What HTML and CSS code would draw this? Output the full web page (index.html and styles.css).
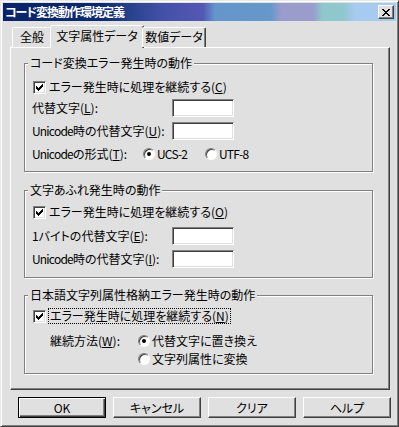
FILE: index.html
```html
<!DOCTYPE html>
<html>
<head>
    <meta charset="utf-8">
    <title>コード変換動作環境定義</title>
    <link rel="stylesheet" href="styles.css">
</head>
<body>
<div class="window">
    <div class="titlebar">
        <span class="title-text">コード変換動作環境定義</span>
        <button class="close-btn" aria-label="閉じる">
            <svg width="8" height="7" viewBox="0 0 8 7" shape-rendering="crispEdges">
                <path d="M0 0h2v1h-2z M6 0h2v1h-2z M1 1h2v1h-2z M5 1h2v1h-2z M2 2h4v1h-4z M3 3h2v1h-2z M2 4h4v1h-4z M1 5h2v1h-2z M5 5h2v1h-2z M0 6h2v1h-2z M6 6h2v1h-2z" fill="#000"/>
            </svg>
        </button>
    </div>

    <div class="tabs">
        <div class="tab tab-general">全般</div>
        <div class="tab tab-text active">文字属性データ</div>
        <div class="tab tab-num">数値データ</div>
    </div>

    <div class="panel">
        <fieldset class="group group-code">
            <legend>コード変換エラー発生時の動作</legend>
            <div class="row check-row cb-code">
                <span class="checkbox"><svg width="7" height="7" viewBox="0 0 7 7" shape-rendering="crispEdges"><path d="M6 0h1v1h-1z M5 1h2v1h-2z M0 2h1v1h-1z M4 2h3v1h-3z M0 3h2v1h-2z M3 3h3v1h-3z M0 4h5v1h-5z M1 5h3v1h-3z M2 6h1v1h-1z" fill="#000"/></svg></span>
                <span>エラー発生時に処理を継続する(<u>C</u>)</span>
            </div>
            <div class="row field-row fr-1">
                <span class="field-label">代替文字(<u>L</u>):</span>
                <input type="text" class="edit">
            </div>
            <div class="row field-row fr-2">
                <span class="field-label"><span class="en">Unicode</span>時の代替文字(<u>U</u>):</span>
                <input type="text" class="edit">
            </div>
            <div class="row radio-row fr-3">
                <span class="radio-label"><span class="en">Unicode</span>の形式(<u>T</u>):</span>
                <span class="option opt-ucs"><span class="radio checked"></span><span class="en">UCS-2</span></span>
                <span class="option"><span class="radio"></span><span class="en">UTF-8</span></span>
            </div>
        </fieldset>

        <fieldset class="group group-overflow">
            <legend>文字あふれ発生時の動作</legend>
            <div class="row check-row cb-overflow">
                <span class="checkbox"><svg width="7" height="7" viewBox="0 0 7 7" shape-rendering="crispEdges"><path d="M6 0h1v1h-1z M5 1h2v1h-2z M0 2h1v1h-1z M4 2h3v1h-3z M0 3h2v1h-2z M3 3h3v1h-3z M0 4h5v1h-5z M1 5h3v1h-3z M2 6h1v1h-1z" fill="#000"/></svg></span>
                <span>エラー発生時に処理を継続する(<u>O</u>)</span>
            </div>
            <div class="row field-row fr-4">
                <span class="field-label">1バイトの代替文字(<u>E</u>):</span>
                <input type="text" class="edit">
            </div>
            <div class="row field-row fr-2">
                <span class="field-label"><span class="en">Unicode</span>時の代替文字(<u>I</u>):</span>
                <input type="text" class="edit">
            </div>
        </fieldset>

        <fieldset class="group group-jp">
            <legend>日本語文字列属性格納エラー発生時の動作</legend>
            <div class="row check-row cb-jp">
                <span class="checkbox"><svg width="7" height="7" viewBox="0 0 7 7" shape-rendering="crispEdges"><path d="M6 0h1v1h-1z M5 1h2v1h-2z M0 2h1v1h-1z M4 2h3v1h-3z M0 3h2v1h-2z M3 3h3v1h-3z M0 4h5v1h-5z M1 5h3v1h-3z M2 6h1v1h-1z" fill="#000"/></svg></span>
                <span class="focused">エラー発生時に処理を継続する(<u>N</u>)</span>
            </div>
            <div class="method">
                <span class="method-label">継続方法(<u>W</u>):</span>
                <span class="option"><span class="radio checked"></span>代替文字に置き換え</span>
                <span></span>
                <span class="option"><span class="radio"></span>文字列属性に変換</span>
            </div>
        </fieldset>
    </div>

    <div class="buttons">
        <button class="btn btn-default">OK</button>
        <button class="btn">キャンセル</button>
        <button class="btn">クリア</button>
        <button class="btn">ヘルプ</button>
    </div>
</div>
</body>
</html>
```

FILE: styles.css
```css
* {
    box-sizing: border-box;
}

body {
    margin: 0;
    background-color: #e0e0e0;
    font-family: "Noto Sans CJK JP", "Noto Sans", sans-serif;
    font-size: 12px;
    line-height: 14px;
    color: #000;
    font-feature-settings: "palt";
}

u {
    text-decoration-thickness: 1px;
    text-underline-offset: 1px;
}

/* latin words run narrower in the dialog font */
.en {
    letter-spacing: -0.8px;
}

.window {
    width: 399px;
    height: 427px;
    background-color: #e0e0e0;
    border: 1px solid;
    border-color: #e8e8e8 #404040 #404040 #e8e8e8;
    box-shadow: inset 1px 1px #fff, inset -1px -1px #808080;
    padding: 2px;
    display: flex;
    flex-direction: column;
}

/* title bar */
.titlebar {
    height: 18px;
    flex: none;
    display: flex;
    align-items: center;
    justify-content: space-between;
    padding: 0 2px 0 2px;
    color: #fff;
    font-weight: bold;
    background: linear-gradient(to right,
        #0a246a 0, #0c286c 95px, #26408a 125px, #4450a8 160px,
        #5458b4 200px, #6496cc 212px, #6698cc 268px, #9a9ccc 278px,
        #9a9ccc 310px, #8ec8cc 320px, #8ec8cc 340px, #a6caf0 352px, #a6caf0 100%);
}

.title-text {
    line-height: 18px;
    letter-spacing: -1px;
}

.close-btn {
    width: 16px;
    height: 14px;
    padding: 0;
    background-color: #e0e0e0;
    border: 1px solid;
    border-color: #fff #404040 #404040 #fff;
    box-shadow: inset -1px -1px #808080;
    display: flex;
    align-items: center;
    justify-content: center;
}

/* tabs */
.tabs {
    display: flex;
    align-items: flex-end;
    height: 22px;
    margin: 4px 0 0 9px;
    position: relative;
    z-index: 1;
}

.tab {
    height: 20px;
    line-height: 18px;
    text-align: center;
    background-color: #e0e0e0;
    border: 1px solid;
    border-bottom: none;
    border-color: #fff #404040 transparent #fff;
    border-radius: 2px 2px 0 0;
    box-shadow: inset -1px 0 #808080;
}

.tab-general {
    width: 40px;
}

.tab-text {
    width: 94px;
}

.tab-num {
    width: 64px;
}

.tab.active {
    height: 23px;
    margin: 0 -2px -1px -2px;
    line-height: 20px;
}

/* tab page */
.panel {
    width: 380px;
    height: 343px;
    margin-left: 7px;
    flex: none;
    border: 1px solid;
    border-color: #fff #404040 #404040 #fff;
    box-shadow: inset -1px -1px #808080;
    padding: 0 0 0 13px;
}

.group {
    width: 349px;
    margin: 0;
    min-width: 0;
    padding: 0 0 0 7px;
    border: 1px solid #808080;
    box-shadow: inset 1px 1px #fff, 1px 1px #fff;
}

.group legend {
    height: 14px;
    line-height: 14px;
    padding: 0 2px;
    margin-left: -4px;
    background-color: #e0e0e0;
}

.group-code {
    margin-top: 8px;
    padding-bottom: 10px;
}

.group-overflow {
    margin-top: 11px;
    padding-bottom: 9px;
}

.group-jp {
    margin-top: 10px;
    padding-bottom: 7px;
}

.row {
    display: flex;
    align-items: center;
}

.check-row {
    height: 14px;
    padding-left: 1px;
}

.field-row {
    height: 18px;
}

.radio-row {
    height: 14px;
}

.cb-code {
    margin-top: 10px;
}

.cb-overflow {
    margin-top: 8px;
}

.cb-jp {
    margin-top: 7px;
}

.fr-1 {
    margin-top: 5px;
}

.fr-2 {
    margin-top: 5px;
}

.fr-3 {
    margin-top: 7px;
}

.fr-4 {
    margin-top: 8px;
}

.field-label {
    width: 140px;
    flex: none;
    white-space: nowrap;
}

.radio-label {
    width: 111px;
    flex: none;
    white-space: nowrap;
}

.opt-ucs {
    width: 62px;
}

.option {
    display: flex;
    align-items: center;
    white-space: nowrap;
}

/* controls */
.checkbox {
    width: 13px;
    height: 13px;
    flex: none;
    margin-right: 3px;
    background-color: #fff;
    border: 1px solid;
    border-color: #808080 #fff #fff #808080;
    box-shadow: inset 1px 1px #404040, inset -1px -1px #e0e0e0;
    display: flex;
    align-items: center;
    justify-content: center;
}

.radio {
    width: 12px;
    height: 12px;
    flex: none;
    margin-right: 2px;
    border-radius: 50%;
    background-color: #fff;
    border: 1px solid;
    border-color: #808080 #fff #fff #808080;
    box-shadow: inset 1px 1px #404040;
    position: relative;
}

.radio.checked::after {
    content: "";
    position: absolute;
    left: 3px;
    top: 3px;
    width: 4px;
    height: 4px;
    border-radius: 50%;
    background-color: #000;
}

.edit {
    width: 62px;
    height: 18px;
    margin: 0;
    padding: 0;
    background-color: #fff;
    border: 1px solid;
    border-color: #808080 #fff #fff #808080;
    box-shadow: inset 1px 1px #404040, inset -1px -1px #e0e0e0;
}

.focused {
    outline: 1px dotted #000;
    outline-offset: 0;
    padding: 0 1px;
}

.method {
    display: grid;
    grid-template-columns: 88px auto;
    grid-auto-rows: 14px;
    row-gap: 4px;
    align-items: center;
    margin-top: 11px;
    padding-left: 18px;
}

.method-label {
    white-space: nowrap;
}

/* dialog buttons */
.buttons {
    display: flex;
    gap: 7px;
    margin: 7px 0 0 15px;
}

.btn {
    width: 88px;
    height: 21px;
    padding: 0;
    font: inherit;
    color: #000;
    background-color: #e0e0e0;
    border: 1px solid;
    border-color: #fff #404040 #404040 #fff;
    box-shadow: inset -1px -1px #808080;
}

.btn-default {
    border-color: #000;
    box-shadow: inset 1px 1px #fff, inset -1px -1px #404040, inset -2px -2px #808080;
}
```
